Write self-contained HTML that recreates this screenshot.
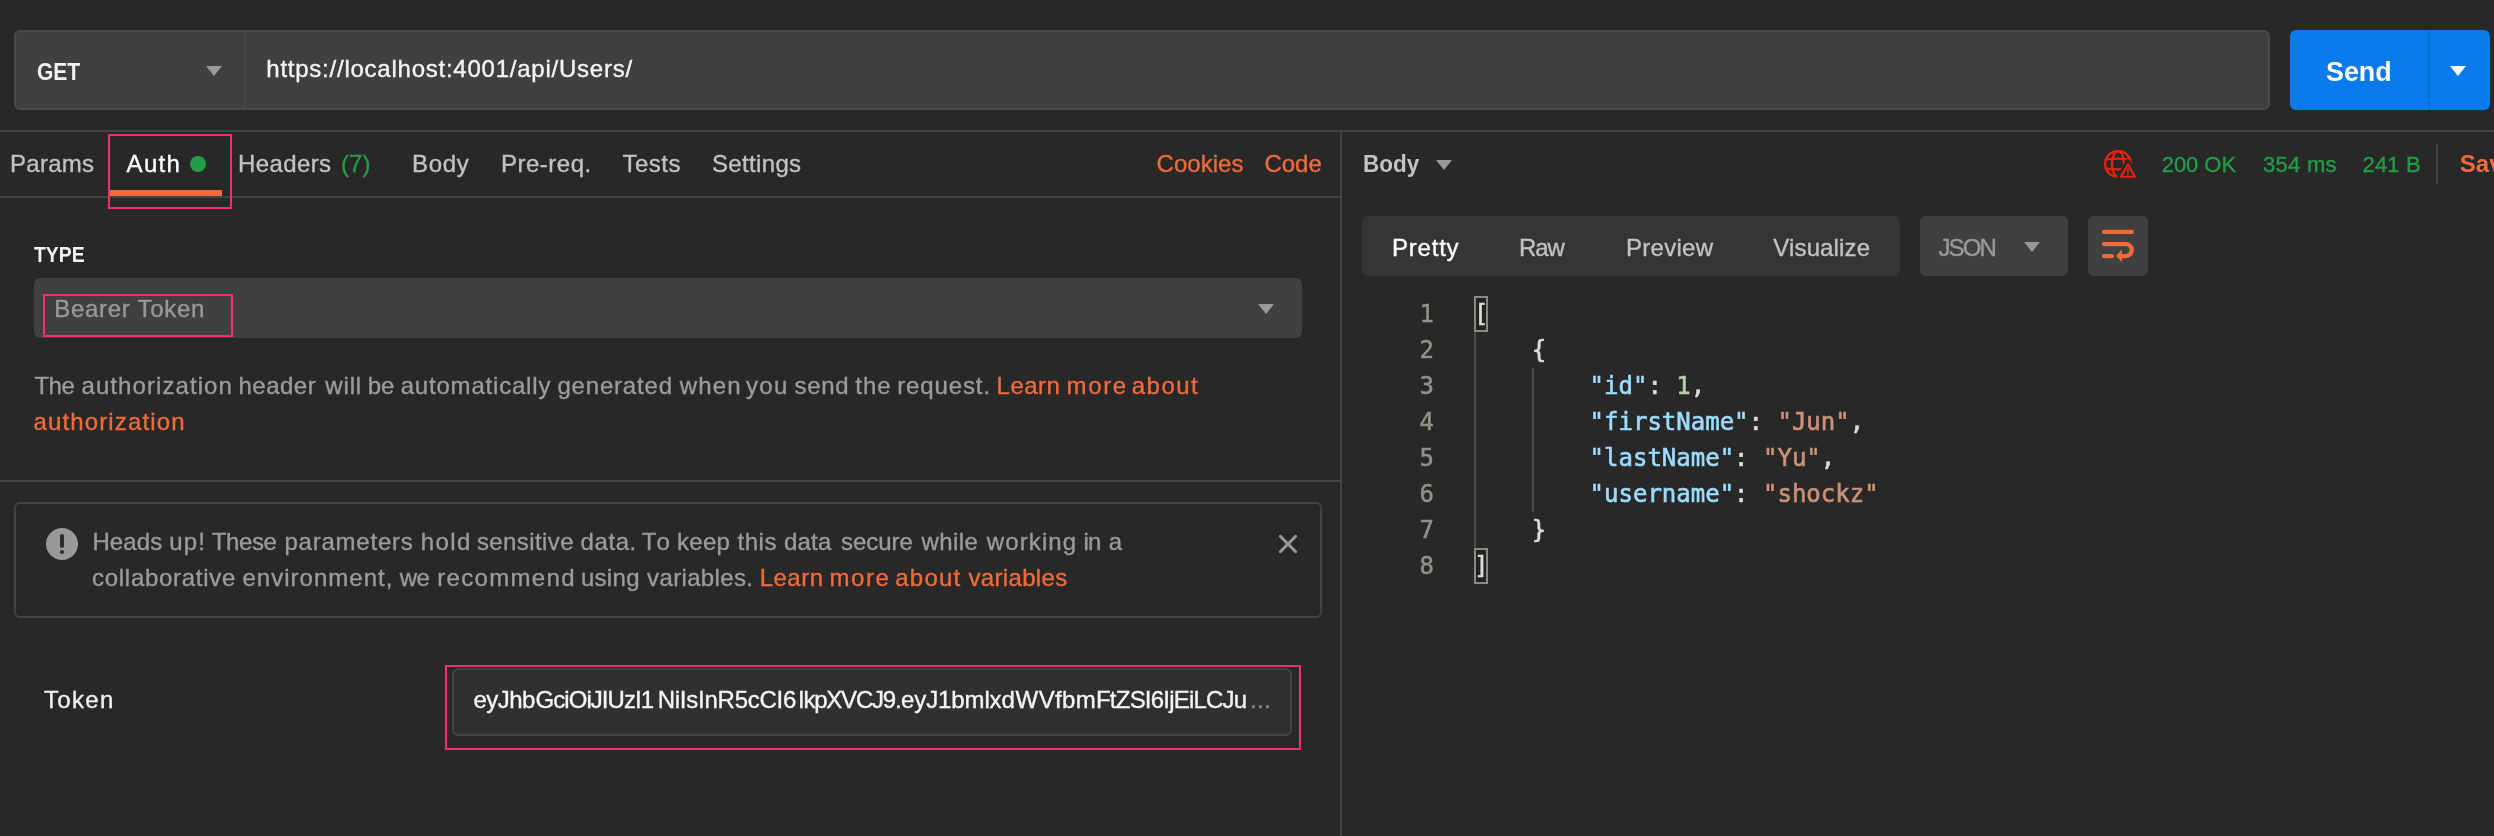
<!DOCTYPE html>
<html lang="en"><head><meta charset="utf-8"><title>Postman - Bearer Token</title>
<style>
html,body{margin:0;padding:0;background:#282828;}
body{width:2494px;height:836px;overflow:hidden;}
#app{position:relative;width:2494px;height:836px;overflow:hidden;background:#282828;font-family:"Liberation Sans",sans-serif;}
#app *{box-sizing:border-box;}
.a{position:absolute;}
.t{position:absolute;white-space:pre;line-height:40px;height:40px;-webkit-text-stroke:0.35px;}
.hl{position:absolute;height:2px;background:#444;}
.vl{position:absolute;width:2px;background:#444;}
.pink{position:absolute;border:2px solid #FB2D6D;}
.tri{position:absolute;width:0;height:0;border-left:8px solid transparent;border-right:8px solid transparent;border-top:10px solid #999;}
.code{position:absolute;white-space:pre;font-family:"DejaVu Sans Mono","Liberation Mono",monospace;font-size:24px;line-height:36px;height:36px;color:#DCDCDC;-webkit-text-stroke:0.6px;}
.ln{position:absolute;font-family:"DejaVu Sans Mono","Liberation Mono",monospace;font-size:24px;line-height:36px;height:36px;color:#92928A;text-align:right;width:60px;-webkit-text-stroke:0.5px;}
.k{color:#9CDCFE;}.s{color:#CE9178;}.n{color:#B5CEA8;}
#txt{position:absolute;left:0;top:0;width:2494px;height:836px;will-change:transform;}
</style></head>
<body>
<div id="app">
<!-- request bar -->
<div class="a" style="left:14px;top:30px;width:2256px;height:80px;background:#404040;border:2px solid #494949;border-radius:6px;"></div>
<div class="a" style="left:244px;top:31px;width:2px;height:78px;background:#484848;"></div>
<div class="tri" style="left:206px;top:66px;"></div>
<div class="a" style="left:2290px;top:30px;width:200px;height:80px;background:#097BED;border-radius:6px;"></div>
<div class="a" style="left:2428px;top:30px;width:2px;height:80px;background:#0A6FD3;"></div>
<div class="tri" style="left:2450px;top:66px;border-top-color:#fff;"></div>
<!-- separators -->
<div class="hl" style="left:0;top:130px;width:2494px;"></div>
<div class="hl" style="left:0;top:196px;width:1340px;"></div>
<div class="vl" style="left:1340px;top:132px;height:704px;"></div>
<div class="hl" style="left:0;top:480px;width:1340px;"></div>
<!-- auth tab -->
<div class="a" style="left:110px;top:190px;width:112px;height:6px;background:#F26B3A;"></div>
<div class="a" style="left:190px;top:156px;width:16px;height:16px;border-radius:50%;background:#249D49;"></div>
<div class="pink" style="left:108px;top:134px;width:124px;height:75px;"></div>
<!-- response header -->
<div class="tri" style="left:1436px;top:160px;"></div>
<svg class="a" style="left:2095px;top:140px;" width="50" height="50" viewBox="0 0 50 50" fill="none" stroke="#EB2013" stroke-width="2.2">
  <circle cx="23" cy="24" r="12.9"/>
  <ellipse cx="23" cy="24" rx="6" ry="12.9"/>
  <path d="M11.3 19.4Q23 17.8 34.7 19.4M11.3 28.6Q23 30.2 34.7 28.6"/>
  <path d="M32.9 21.7L41.8 38.5H24Z" fill="#282828" stroke="#282828" stroke-width="5" stroke-linejoin="round"/>
  <path d="M32.9 24.3L39.8 36.8H26Z" stroke-linejoin="round" stroke-width="2.1"/>
  <path d="M32.9 28.2V32.6M32.9 33.6V35" stroke-width="1.9"/>
</svg>
<div class="a" style="left:2436px;top:144px;width:2px;height:40px;background:#444;"></div>
<!-- type dropdown -->
<div class="a" style="left:34px;top:278px;width:1268px;height:60px;background:#404040;border-radius:6px;"></div>
<div class="tri" style="left:1258px;top:304px;"></div>
<div class="pink" style="left:43px;top:294px;width:190px;height:43px;"></div>
<!-- alert -->
<div class="a" style="left:14px;top:502px;width:1308px;height:116px;border:2px solid #444;border-radius:6px;"></div>
<div class="a" style="left:46px;top:528px;width:32px;height:32px;border-radius:50%;background:#999;"></div>
<div class="a" style="left:60px;top:534px;width:4px;height:14px;background:#2C2C2C;border-radius:2px;"></div>
<div class="a" style="left:60px;top:550px;width:4px;height:4px;background:#2C2C2C;border-radius:50%;"></div>
<svg class="a" style="left:1277px;top:533px;" width="22" height="22" viewBox="0 0 22 22" stroke="#999" stroke-width="2.9" stroke-linecap="round" fill="none"><path d="M3.3 3.3L18.7 18.7M18.7 3.3L3.3 18.7"/></svg>
<!-- token -->
<div class="a" style="left:452px;top:668px;width:840px;height:68px;background:#303030;border:2px solid #444;border-radius:6px;"></div>
<div class="pink" style="left:445px;top:665px;width:856px;height:85px;"></div>
<!-- response toolbar -->
<div class="a" style="left:1362px;top:216px;width:538px;height:60px;background:#353535;border-radius:6px;"></div>
<div class="a" style="left:1920px;top:216px;width:148px;height:60px;background:#404040;border-radius:6px;"></div>
<div class="tri" style="left:2024px;top:242px;"></div>
<div class="a" style="left:2088px;top:216px;width:60px;height:60px;background:#404040;border-radius:6px;"></div>
<svg class="a" style="left:2088px;top:216px;" width="60" height="60" viewBox="0 0 60 60" fill="none" stroke="#F26B3A" stroke-width="4.3" stroke-linecap="round">
  <path d="M16.1 15.95H43.8"/>
  <path d="M16.1 28.05H37.8a6 6 0 0 1 0 12H33.5" stroke-linecap="round"/>
  <path d="M16.1 40.05H23.9"/>
  <path d="M33.9 33.7V46.1L28 40Z" fill="#F26B3A" stroke="none"/>
</svg>

<!-- text -->
<div id="txt">
<span class="t" style="left:36.50px;top:51.50px;font-size:24px;color:#F2F2F2;letter-spacing:0.000px;font-weight:700;-webkit-text-stroke:0;transform:scaleX(0.8757);transform-origin:0 0;">GET</span>
<span class="t" style="left:266.30px;top:49.20px;font-size:24px;color:#F5F5F5;letter-spacing:0.758px;">https://localhost:4001/api/Users/</span>
<span class="t" style="left:2326.40px;top:52.25px;font-size:28px;color:#fff;letter-spacing:0.000px;font-weight:700;-webkit-text-stroke:0;transform:scaleX(0.9591);transform-origin:0 0;">Send</span>
<span class="t" style="left:10.10px;top:143.70px;font-size:24px;color:#C2C2C2;letter-spacing:0.243px;">Params</span>
<span class="t" style="left:126.60px;top:143.70px;font-size:24px;color:#fff;letter-spacing:1.292px;">Auth</span>
<span class="t" style="left:238.10px;top:143.70px;font-size:24px;color:#C2C2C2;letter-spacing:0.364px;">Headers</span>
<span class="t" style="left:340.90px;top:143.70px;font-size:24px;color:#249D49;letter-spacing:0.180px;">(7)</span>
<span class="t" style="left:412.10px;top:143.70px;font-size:24px;color:#C2C2C2;letter-spacing:0.632px;">Body</span>
<span class="t" style="left:501.00px;top:143.70px;font-size:24px;color:#C2C2C2;letter-spacing:0.496px;">Pre-req.</span>
<span class="t" style="left:622.60px;top:143.70px;font-size:24px;color:#C2C2C2;letter-spacing:0.446px;">Tests</span>
<span class="t" style="left:711.90px;top:143.70px;font-size:24px;color:#C2C2C2;letter-spacing:0.354px;">Settings</span>
<span class="t" style="left:1156.60px;top:143.70px;font-size:24px;color:#F26B3A;letter-spacing:0.032px;">Cookies</span>
<span class="t" style="left:1264.40px;top:143.70px;font-size:24px;color:#F26B3A;letter-spacing:0.024px;">Code</span>
<span class="t" style="left:1362.66px;top:143.70px;font-size:24px;color:#C4C4C4;letter-spacing:0.000px;font-weight:700;-webkit-text-stroke:0;transform:scaleX(0.9371);transform-origin:0 0;">Body</span>
<span class="t" style="left:2161.70px;top:144.50px;font-size:22px;color:#249D49;letter-spacing:-0.046px;">200 OK</span>
<span class="t" style="left:2263.10px;top:144.50px;font-size:22px;color:#249D49;letter-spacing:0.251px;">354 ms</span>
<span class="t" style="left:2362.50px;top:144.50px;font-size:22px;color:#249D49;letter-spacing:0.170px;">241 B</span>
<span class="t" style="left:2459.80px;top:143.50px;font-size:24px;color:#F26B3A;letter-spacing:0.000px;font-weight:700;-webkit-text-stroke:0;">Save Response</span>
<span class="t" style="left:34.20px;top:234.50px;font-size:22px;color:#F2F2F2;letter-spacing:0.000px;font-weight:700;-webkit-text-stroke:0;transform:scaleX(0.8805);transform-origin:0 0;">TYPE</span>
<span class="t" style="left:54.20px;top:289.10px;font-size:24px;color:#999999;letter-spacing:0.709px;">Bearer Token</span>
<span class="t" style="left:33.50px;top:401.70px;font-size:24px;color:#F26B3A;letter-spacing:1.135px;">authorization</span>
<span class="t" style="left:34.40px;top:365.70px;font-size:24px;color:#9C9C9C;letter-spacing:-0.454px;">The</span>
<span class="t" style="left:81.50px;top:365.70px;font-size:24px;color:#9C9C9C;letter-spacing:1.077px;">authorization</span>
<span class="t" style="left:238.50px;top:365.70px;font-size:24px;color:#9C9C9C;letter-spacing:0.492px;">header</span>
<span class="t" style="left:325.30px;top:365.70px;font-size:24px;color:#9C9C9C;letter-spacing:0.835px;">will</span>
<span class="t" style="left:367.80px;top:365.70px;font-size:24px;color:#9C9C9C;letter-spacing:-0.248px;">be</span>
<span class="t" style="left:400.70px;top:365.70px;font-size:24px;color:#9C9C9C;letter-spacing:0.803px;">automatically</span>
<span class="t" style="left:557.40px;top:365.70px;font-size:24px;color:#9C9C9C;letter-spacing:0.819px;">generated</span>
<span class="t" style="left:679.70px;top:365.70px;font-size:24px;color:#9C9C9C;letter-spacing:1.158px;">when</span>
<span class="t" style="left:745.90px;top:365.70px;font-size:24px;color:#9C9C9C;letter-spacing:1.376px;">you</span>
<span class="t" style="left:794.60px;top:365.70px;font-size:24px;color:#9C9C9C;letter-spacing:0.668px;">send</span>
<span class="t" style="left:855.30px;top:365.70px;font-size:24px;color:#9C9C9C;letter-spacing:0.942px;">the</span>
<span class="t" style="left:897.20px;top:365.70px;font-size:24px;color:#9C9C9C;letter-spacing:0.878px;">request.</span>
<span class="t" style="left:996.60px;top:365.70px;font-size:24px;color:#F26B3A;letter-spacing:0.491px;">Learn</span>
<span class="t" style="left:1066.60px;top:365.70px;font-size:24px;color:#F26B3A;letter-spacing:1.623px;">more</span>
<span class="t" style="left:1131.80px;top:365.70px;font-size:24px;color:#F26B3A;letter-spacing:1.452px;">about</span>
<span class="t" style="left:92.40px;top:521.50px;font-size:24px;color:#9C9C9C;letter-spacing:0.106px;">Heads</span>
<span class="t" style="left:169.20px;top:521.50px;font-size:24px;color:#9C9C9C;letter-spacing:1.202px;">up!</span>
<span class="t" style="left:211.70px;top:521.50px;font-size:24px;color:#9C9C9C;letter-spacing:-0.389px;">These</span>
<span class="t" style="left:284.50px;top:521.50px;font-size:24px;color:#9C9C9C;letter-spacing:0.769px;">parameters</span>
<span class="t" style="left:420.80px;top:521.50px;font-size:24px;color:#9C9C9C;letter-spacing:1.358px;">hold</span>
<span class="t" style="left:476.90px;top:521.50px;font-size:24px;color:#9C9C9C;letter-spacing:0.409px;">sensitive</span>
<span class="t" style="left:580.60px;top:521.50px;font-size:24px;color:#9C9C9C;letter-spacing:0.572px;">data.</span>
<span class="t" style="left:641.80px;top:521.50px;font-size:24px;color:#9C9C9C;letter-spacing:2.700px;">To</span>
<span class="t" style="left:676.90px;top:521.50px;font-size:24px;color:#9C9C9C;letter-spacing:0.335px;">keep</span>
<span class="t" style="left:737.50px;top:521.50px;font-size:24px;color:#9C9C9C;letter-spacing:0.551px;">this</span>
<span class="t" style="left:783.90px;top:521.50px;font-size:24px;color:#9C9C9C;letter-spacing:0.212px;">data</span>
<span class="t" style="left:841.00px;top:521.50px;font-size:24px;color:#9C9C9C;letter-spacing:-0.058px;">secure</span>
<span class="t" style="left:921.40px;top:521.50px;font-size:24px;color:#9C9C9C;letter-spacing:0.414px;">while</span>
<span class="t" style="left:986.80px;top:521.50px;font-size:24px;color:#9C9C9C;letter-spacing:1.108px;">working</span>
<span class="t" style="left:1083.40px;top:521.50px;font-size:24px;color:#9C9C9C;letter-spacing:-0.632px;">in</span>
<span class="t" style="left:1108.70px;top:521.50px;font-size:24px;color:#9C9C9C;letter-spacing:-2.200px;">a</span>
<span class="t" style="left:92.00px;top:557.50px;font-size:24px;color:#9C9C9C;letter-spacing:0.717px;">collaborative</span>
<span class="t" style="left:242.40px;top:557.50px;font-size:24px;color:#9C9C9C;letter-spacing:1.021px;">environment,</span>
<span class="t" style="left:399.70px;top:557.50px;font-size:24px;color:#9C9C9C;letter-spacing:-0.632px;">we</span>
<span class="t" style="left:437.20px;top:557.50px;font-size:24px;color:#9C9C9C;letter-spacing:1.329px;">recommend</span>
<span class="t" style="left:580.90px;top:557.50px;font-size:24px;color:#9C9C9C;letter-spacing:0.318px;">using</span>
<span class="t" style="left:647.10px;top:557.50px;font-size:24px;color:#9C9C9C;letter-spacing:0.350px;">variables.</span>
<span class="t" style="left:759.70px;top:557.50px;font-size:24px;color:#F26B3A;letter-spacing:0.491px;">Learn</span>
<span class="t" style="left:829.60px;top:557.50px;font-size:24px;color:#F26B3A;letter-spacing:1.489px;">more</span>
<span class="t" style="left:895.30px;top:557.50px;font-size:24px;color:#F26B3A;letter-spacing:1.227px;">about</span>
<span class="t" style="left:968.50px;top:557.50px;font-size:24px;color:#F26B3A;letter-spacing:0.332px;">variables</span>
<span class="t" style="left:44.00px;top:679.70px;font-size:24px;color:#F2F2F2;letter-spacing:1.326px;">Token</span>
<span class="t" style="left:473.60px;top:679.70px;font-size:24px;color:#F5F5F5;letter-spacing:-0.599px;">eyJhb</span>
<span class="t" style="left:535.60px;top:679.70px;font-size:24px;color:#F5F5F5;letter-spacing:-0.957px;">GciOiJIUzI1</span>
<span class="t" style="left:657.70px;top:679.70px;font-size:24px;color:#F5F5F5;letter-spacing:-0.248px;">NiIsInR5cCI6</span>
<span class="t" style="left:798.00px;top:679.70px;font-size:24px;color:#F5F5F5;letter-spacing:-1.226px;">IkpXVCJ9.</span>
<span class="t" style="left:901.00px;top:679.70px;font-size:24px;color:#F5F5F5;letter-spacing:-0.108px;">eyJ1bmlxd</span>
<span class="t" style="left:1015.60px;top:679.70px;font-size:24px;color:#F5F5F5;letter-spacing:0.381px;">WVfbm</span>
<span class="t" style="left:1096.00px;top:679.70px;font-size:24px;color:#F5F5F5;letter-spacing:-0.787px;">FtZSI6IjEiLCJu</span>
<span class="t" style="left:1249.90px;top:679.70px;font-size:24px;color:#8A8A8A;letter-spacing:0.382px;">...</span>
<span class="t" style="left:1392.00px;top:227.50px;font-size:24px;color:#fff;letter-spacing:0.783px;">Pretty</span>
<span class="t" style="left:1519.00px;top:227.50px;font-size:24px;color:#C2C2C2;letter-spacing:-1.090px;">Raw</span>
<span class="t" style="left:1626.00px;top:227.50px;font-size:24px;color:#C2C2C2;letter-spacing:0.279px;">Preview</span>
<span class="t" style="left:1773.30px;top:227.50px;font-size:24px;color:#C2C2C2;letter-spacing:0.142px;">Visualize</span>
<span class="t" style="left:1938.40px;top:227.50px;font-size:24px;color:#999999;letter-spacing:-1.825px;">JSON</span>
<!-- code viewer -->
<div class="a" style="left:1474px;top:296px;width:14px;height:36px;border:2px solid #8A8A8A;background:#1F241D;"></div>
<div class="a" style="left:1474px;top:548px;width:14px;height:36px;border:2px solid #8A8A8A;background:#1F241D;"></div>
<div class="a" style="left:1474px;top:332px;width:2px;height:216px;background:#4C4C45;"></div>
<div class="a" style="left:1532px;top:368px;width:2px;height:144px;background:#4C4C45;"></div>
<span class="ln" style="left:1374px;top:296px;">1</span>
<span class="ln" style="left:1374px;top:332px;">2</span>
<span class="ln" style="left:1374px;top:368px;">3</span>
<span class="ln" style="left:1374px;top:404px;">4</span>
<span class="ln" style="left:1374px;top:440px;">5</span>
<span class="ln" style="left:1374px;top:476px;">6</span>
<span class="ln" style="left:1374px;top:512px;">7</span>
<span class="ln" style="left:1374px;top:548px;">8</span>
<span class="code" style="left:1474px;top:296px;">[</span>
<span class="code" style="left:1474px;top:332px;">    {</span>
<span class="code" style="left:1474px;top:368px;">        <span class="k">"id"</span>: <span class="n">1</span>,</span>
<span class="code" style="left:1474px;top:404px;">        <span class="k">"firstName"</span>: <span class="s">"Jun"</span>,</span>
<span class="code" style="left:1474px;top:440px;">        <span class="k">"lastName"</span>: <span class="s">"Yu"</span>,</span>
<span class="code" style="left:1474px;top:476px;">        <span class="k">"username"</span>: <span class="s">"shockz"</span></span>
<span class="code" style="left:1474px;top:512px;">    }</span>
<span class="code" style="left:1474px;top:548px;">]</span>
</div>
</div>
</body></html>
